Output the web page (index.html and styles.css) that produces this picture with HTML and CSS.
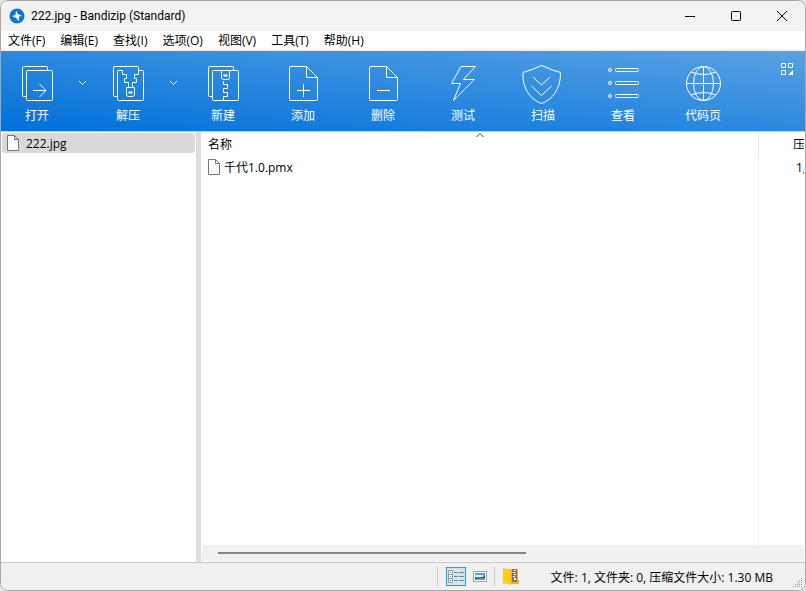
FILE: index.html
```html
<!DOCTYPE html>
<html lang="zh-CN">
<head>
    <meta charset="UTF-8">
    <meta name="viewport" content="width=device-width, initial-scale=1.0">
    <title>222.jpg - Bandizip (Standard)</title>
    <link rel="stylesheet" href="styles.css">
</head>
<body>
    <div class="window">
        <header class="titlebar">
            <svg class="app-icon" width="16" height="16" viewBox="0 0 16 16">
                <circle cx="8" cy="8" r="7.5" fill="#0b78d6"/>
                <path d="M7 2.500L9 6.200L12.800 7.500L9.800 9L10 13.500L7.200 10L3.300 8.200L6.500 6.800Z" fill="#fff"/>
            </svg>
            <h1>222.jpg - Bandizip (Standard)</h1>
            <div class="window-buttons">
                <button aria-label="最小化"><svg width="12" height="12" viewBox="0 0 12 12"><path d="M1 6.500h10"/></svg></button>
                <button aria-label="最大化"><svg width="12" height="12" viewBox="0 0 12 12"><rect x="1.500" y="1.500" width="9" height="9" rx="1"/></svg></button>
                <button aria-label="关闭"><svg width="12" height="12" viewBox="0 0 12 12"><path d="M1 1l10 10M11 1L1 11"/></svg></button>
            </div>
        </header>

        <nav class="menubar">
            <button>文件(F)</button>
            <button>编辑(E)</button>
            <button>查找(I)</button>
            <button>选项(O)</button>
            <button>视图(V)</button>
            <button>工具(T)</button>
            <button>帮助(H)</button>
        </nav>

        <div class="toolbar">
            <button class="tool split">
                <svg width="40" height="40" viewBox="0 0 40 40"><path d="M30.500 6V3.500q0-1-1-1h-23q-1 0-1 1v28q0 1 1 1H9"/><rect x="9.500" y="6.500" width="26" height="30" rx="1"/><path d="M16 26.500h13M22.500 20l6.500 6.500-6.500 6.500"/></svg>
                <span>打开</span>
            </button>
            <button class="drop" aria-label="打开选项"><svg width="9" height="6" viewBox="0 0 9 6"><path d="M1 1l3.500 3.500L8 1"/></svg></button>
            <button class="tool split">
                <svg width="40" height="40" viewBox="0 0 40 40"><path d="M30.500 6V3.500q0-1-1-1h-23q-1 0-1 1v28q0 1 1 1H9"/><path d="M20.500 23.500v-5h-4v-4h2v-4h-4v-4h-4q-1 0-1 1v28q0 1 1 1h24q1 0 1-1v-28q0-1-1-1h-4v4h-4v4h2v4h-4v5"/><path d="M18.500 23.500h8v7q0 2-2 2h-4q-2 0-2-2z"/><rect x="21" y="28" width="3" height="1"/></svg>
                <span>解压</span>
            </button>
            <button class="drop" aria-label="解压选项"><svg width="9" height="6" viewBox="0 0 9 6"><path d="M1 1l3.500 3.500L8 1"/></svg></button>
            <button class="tool">
                <svg width="40" height="40" viewBox="0 0 40 40"><path d="M30.500 6V3.500q0-1-1-1h-23q-1 0-1 1v28q0 1 1 1H9"/><rect x="9.500" y="6.500" width="26" height="30" rx="1"/><path d="M18.500 6.500v7q0 2 2 2h4q2 0 2-2v-7M20.500 17v3.500h4v4h-4v4h4v4h-4v4"/><rect x="21" y="11" width="3" height="1"/></svg>
                <span>新建</span>
            </button>
            <button class="tool">
                <svg width="40" height="40" viewBox="0 0 40 40"><path d="M23.500 2.500h-16q-1 0-1 1v32q0 1 1 1h26q1 0 1-1v-22zv11h11M20.500 20v13M14 26.500h13"/></svg>
                <span>添加</span>
            </button>
            <button class="tool">
                <svg width="40" height="40" viewBox="0 0 40 40"><path d="M23.500 2.500h-16q-1 0-1 1v32q0 1 1 1h26q1 0 1-1v-22zv11h11M14 26.500h13"/></svg>
                <span>删除</span>
            </button>
            <button class="tool">
                <svg width="40" height="40" viewBox="0 0 40 40"><path d="M18 2.500h14.500L20.500 15.500h11L10.500 36.500L17.500 19.500H8.500z"/></svg>
                <span>测试</span>
            </button>
            <button class="tool">
                <svg width="40" height="40" viewBox="0 0 40 40"><path d="M18.500 1.500Q9 6 0 8.500C-1 25 8 36 18.500 39.500C29 36 38 25 37.500 8.500Q28 6 18.500 1.500zM10 13l8.500 8 8.500-8M8.500 22l10 9.500 10-9.500"/></svg>
                <span>扫描</span>
            </button>
            <button class="tool">
                <svg width="40" height="40" viewBox="0 0 40 40"><circle cx="7" cy="6" r="1.500"/><circle cx="7" cy="19" r="1.500"/><circle cx="7" cy="32" r="1.500"/><rect x="12.500" y="4.500" width="23" height="3" rx="1"/><rect x="12.500" y="17.500" width="23" height="3" rx="1"/><rect x="12.500" y="30.500" width="23" height="3" rx="1"/></svg>
                <span>查看</span>
            </button>
            <button class="tool">
                <svg width="40" height="40" viewBox="0 0 40 40"><circle cx="20.500" cy="19.500" r="17"/><ellipse cx="20.500" cy="19.500" rx="10" ry="17"/><path d="M3 19.500h35M20.500 2v35M8 8q12.500 5 25 0M8 31q12.500-5 25 0"/></svg>
                <span>代码页</span>
            </button>
            <button class="layout" aria-label="布局"><svg width="12" height="12" viewBox="0 0 12 12"><path d="M.5.5h4v4h-4zM7.500.5h4v4h-4zM.5 7.500h4v4h-4z"/><path class="corner" d="M12 7v5H7z"/></svg></button>
        </div>

        <main class="panes">
            <aside class="tree">
                <a href="#" class="node">
                    <svg class="file" width="12" height="16" viewBox="0 0 12 16"><path d="M.5.5h7l4 4v11H.5zM7.500.5v4h4"/></svg>
                    222.jpg
                </a>
            </aside>
            <section class="list">
                <div class="rows">
                    <table>
                        <thead>
                            <tr>
                                <th class="name">名称<svg class="sort" width="9" height="6" viewBox="0 0 9 6"><path d="M1 5l3.500-3.500L8 5"/></svg></th>
                                <th class="packed">压</th>
                            </tr>
                        </thead>
                        <tbody>
                            <tr>
                                <td class="name">
                                    <span class="entry"><svg class="file" width="12" height="16" viewBox="0 0 12 16"><path d="M.5.5h7l4 4v11H.5zM7.500.5v4h4"/></svg>千代1.0.pmx</span>
                                </td>
                                <td class="packed">1,</td>
                            </tr>
                            <tr class="rest">
                                <td class="name"></td>
                                <td></td>
                            </tr>
                        </tbody>
                    </table>
                </div>
                <div class="scrollbar"><div class="thumb"></div></div>
            </section>
        </main>

        <footer class="statusbar">
            <div class="views">
                <button class="active" aria-label="详细信息">
                    <svg width="16" height="13" viewBox="0 0 16 13">
                        <path fill="#fff" stroke="#999" d="M.5.5h4v4h-4zM.5 4.500h4v4h-4zM.5 8.500h4v4h-4z"/>
                        <path stroke="#808080" d="M6 2.500h4M11 2.500h5M6 6.500h4M11 6.500h5M6 10.500h4M11 10.500h5"/>
                        <g stroke="none"><path fill="#888" d="M2 2h1v1H2z"/><path fill="#2a7de1" d="M2 6h1v1H2z"/><path fill="#e02020" d="M2 10h1v1H2z"/></g>
                    </svg>
                </button>
                <button aria-label="缩略图">
                    <svg width="14" height="11" viewBox="0 0 14 11">
                        <rect x=".5" y=".5" width="13" height="10" fill="#fff" stroke="#a0a0a0"/>
                        <g stroke="none"><path fill="#5c9fdc" d="M2 2h10v7H2z"/><path fill="#d8e9f7" d="M2 4h8v2H2z"/><path fill="#35604f" d="M2 6l4 1 6-2v2L2 8z"/></g>
                    </svg>
                </button>
            </div>
            <button class="archive" aria-label="压缩包信息">
                <svg width="16" height="17" viewBox="0 0 16 17">
                    <path fill="#f5b400" d="M5 1h10v11h1v4H5z"/>
                    <path fill="#777" d="M9 1h5v13H9z"/>
                    <path fill="#fff" d="M11 2h2v1h-2zM10 4h2v1h-2zM11 6h2v1h-2zM10 8h2v1h-2zM11 10h2v2h-2z"/>
                    <path fill="#ffca1a" d="M0 0l8 2v15l-8-2z"/>
                </svg>
            </button>
            <p>文件: 1, 文件夹: 0, 压缩文件大小: 1.30 MB</p>
            <svg class="grip" width="10" height="10" viewBox="0 0 10 10"><path stroke-dasharray="1 1" d="M8 .5h2M6 2.500h4M4 4.500h6M2 6.500h8M0 8.500h10"/></svg>
        </footer>
    </div>
</body>
</html>
```
FILE: styles.css
```css
* {
    box-sizing: border-box;
}

body {
    margin: 0;
    background: #e4e4e4;
    font: 12px "Open Sans", "Noto Sans CJK SC", sans-serif;
    color: #000;
}

h1, p {
    margin: 0;
    font-size: 12px;
    font-weight: normal;
}

h1 {
    font-family: Roboto, sans-serif;
}

button {
    padding: 0;
    border: 0;
    background: none;
    font: inherit;
    color: inherit;
}

svg {
    display: block;
    fill: none;
    stroke: currentColor;
}

.window {
    display: flex;
    flex-direction: column;
    height: 100vh;
    border: 1px solid #a8a8a8;
    border-radius: 8px;
    background: #fff;
    overflow: hidden;
}

/* title bar and menu */
.titlebar {
    display: flex;
    align-items: center;
    height: 30px;
    padding-left: 8px;
    gap: 6px;
    background: #f2f2f2;
}

.window-buttons {
    display: flex;
    margin-left: auto;
}

.window-buttons button {
    display: grid;
    place-items: center;
    width: 46px;
    height: 30px;
}

.app-icon, .archive svg {
    stroke: none;
}

.menubar {
    display: flex;
    gap: 1px;
    height: 20px;
    border-bottom: 2px solid #f0f0f0;
}

.menubar button {
    padding: 0 7px;
}

/* toolbar */
.toolbar {
    display: flex;
    height: 81px;
    border-bottom: 1px solid #ccc;
    background: linear-gradient(to top right, #0070d9, #58a2e4);
    color: #fff;
}

.tool {
    display: flex;
    flex-direction: column;
    align-items: center;
    gap: 4px;
    width: 80px;
    padding-top: 13px;
    line-height: 16px;
}

.tool svg {
    overflow: visible;
}

.split {
    width: 72px;
}

.drop {
    display: flex;
    justify-content: center;
    width: 19px;
    padding-top: 29px;
}

.layout {
    display: flex;
    margin-left: auto;
    padding: 12px 12px 0 0;
}

.corner {
    fill: #fff;
    stroke: none;
}

/* folder tree and file list */
.panes {
    display: flex;
    flex: 1;
    min-height: 0;
}

.tree {
    width: 200px;
    padding: 1px 1px 0;
    border-right: 5px solid #dcdcdc;
}

.node {
    display: flex;
    align-items: center;
    gap: 7px;
    height: 20px;
    padding-left: 5px;
    border-radius: 3px;
    background: #d9d9d9;
    color: #000;
    text-decoration: none;
}

.file {
    fill: #fafafa;
    stroke: #767676;
}

.list {
    display: flex;
    flex: 1;
    flex-direction: column;
    min-width: 0;
    padding: 0 1px 1px;
}

.rows {
    flex: 1;
    overflow: hidden;
}

table {
    width: 100%;
    height: 100%;
    table-layout: fixed;
    border-collapse: separate;
    border-spacing: 0;
}

th, td {
    padding: 0 6px;
    font-weight: normal;
    text-align: left;
    white-space: nowrap;
}

th {
    position: relative;
    height: 24px;
}

td {
    height: 22px;
}

th.name {
    border-right: 1px solid #e5e5e5;
}

td.name {
    border-right: 1px solid #e8f2fc;
}

.packed {
    width: 45px;
    padding: 0 0 0 34px;
}

td.packed {
    padding-left: 37px;
}

.rest td {
    height: auto;
}

.sort {
    position: absolute;
    top: 0;
    left: 50%;
    transform: translateX(-50%);
    stroke: #333;
}

.entry {
    display: flex;
    align-items: center;
    gap: 4px;
}

.scrollbar {
    height: 16px;
    padding: 7px 16px;
    background: #f0f0f0;
}

.thumb {
    width: 54%;
    height: 2px;
    background: #858585;
}

/* status bar */
.statusbar {
    display: flex;
    align-items: center;
    justify-content: flex-end;
    height: 28px;
    border-top: 1px solid #c6c6c6;
    background: #f0f0f0;
}

.views {
    display: flex;
    align-items: center;
    gap: 7px;
    padding: 0 7px 0 8px;
    border: solid #c8c8c8;
    border-width: 0 1px;
}

.active {
    display: grid;
    place-items: center;
    width: 20px;
    height: 19px;
    border: 1px solid #26a0da;
    background: #cce8f6;
}

.archive {
    margin-left: 8px;
}

.statusbar p {
    margin: 0 20px 0 32px;
}

.grip {
    align-self: flex-end;
    margin: 0 2px 2px 0;
    stroke: #999;
}
```
